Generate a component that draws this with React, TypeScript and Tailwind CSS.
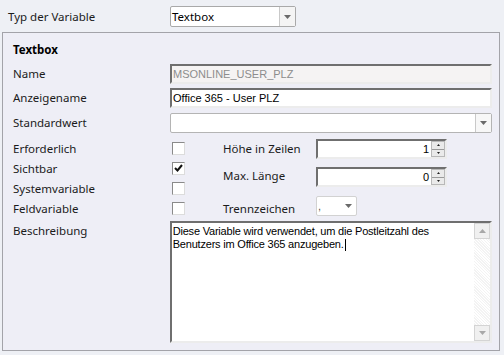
import React from 'react';

const label = "font-['Noto_Sans',sans-serif] text-[11.5px] text-[#1b1b1b] leading-none";
const sunken =
  'border-2 border-t-[#6f6f6f] border-l-[#6f6f6f] border-r-[#ececec] border-b-[#ececec] bg-white';
const field = "font-['Liberation_Sans',sans-serif] text-[11px] leading-none";

function Arrow() {
  return (
    <svg width="7" height="4" viewBox="0 0 7 4">
      <path d="M0 0h7L3.5 4z" fill="#6a6a6a" />
    </svg>
  );
}

function Check({ checked }: { checked?: boolean }) {
  return (
    <div className="w-[13px] h-[13px] border border-t-[#8a8a8a] border-l-[#8a8a8a] border-r-[#dcdcdc] border-b-[#dcdcdc] bg-white flex items-center justify-center">
      {checked && (
        <svg width="9" height="8" viewBox="0 0 9 8">
          <path d="M1 4l2.5 2.5L8 1" stroke="#111" strokeWidth="2" fill="none" />
        </svg>
      )}
    </div>
  );
}

function Spin({ value }: { value: string }) {
  return (
    <div className={`w-[131px] h-[20px] ${sunken} flex items-center`}>
      <span className={`${field} flex-1 text-right pr-[2px] text-black`}>{value}</span>
      <div className="w-[14px] h-full flex flex-col border border-[#b8b8b8]">
        <div className="flex-1 bg-[#eaeaea] border-b border-[#9a9a9a] flex items-center justify-center">
          <svg width="3" height="2" viewBox="0 0 3 2"><path d="M0 2h3L1.5 0z" fill="#222" /></svg>
        </div>
        <div className="flex-1 bg-[#eaeaea] flex items-center justify-center">
          <svg width="3" height="2" viewBox="0 0 3 2"><path d="M0 0h3L1.5 2z" fill="#222" /></svg>
        </div>
      </div>
    </div>
  );
}

export default function App() {
  return (
    <div className="w-[504px] h-[355px] bg-[#eef0f5] overflow-hidden pt-[6px]">
      {/* Typ der Variable */}
      <div className="flex items-center h-[21px]">
        <div className={`${label} w-[170px] pl-[8px]`}>Typ der Variable</div>
        <div className="w-[126px] h-[21px] bg-white border border-[#a9a9a9] rounded-[2px] flex items-center">
          <span className={`${label} flex-1 pl-[1px] text-black`}>Textbox</span>
          <div className="w-[16px] h-full border-l border-[#c9c9c9] bg-[#f4f4f4] flex items-center justify-center">
            <Arrow />
          </div>
        </div>
      </div>

      {/* Panel */}
      <div className="mt-[5px] ml-[2px] w-[498px] h-[319px] border border-[#a3a3a9] bg-[#eeeef6] pl-[10px] pr-[7px]">
        <div className={`${label} font-bold text-black pt-[11px] h-[31px]`}>Textbox</div>

        <div className="flex items-center h-[20px]">
          <div className={`${label} w-[157px]`}>Name</div>
          <div className={`flex-1 h-[20px] ${sunken} !bg-[#f5f3f3] flex items-center pl-[1px]`}>
            <span className={`${field} text-[#8d8d8d]`}>MSONLINE_USER_PLZ</span>
          </div>
        </div>

        <div className="flex items-center h-[20px] mt-[4px]">
          <div className={`${label} w-[157px]`}>Anzeigename</div>
          <div className={`flex-1 h-[20px] ${sunken} flex items-center pl-[1px]`}>
            <span className={`${field} text-black`}>Office 365 - User PLZ</span>
          </div>
        </div>

        <div className="flex items-center h-[20px] mt-[5px]">
          <div className={`${label} w-[157px]`}>Standardwert</div>
          <div className="flex-1 h-[20px] bg-white border border-[#b4b4b4] rounded-[2px] flex justify-end">
            <div className="w-[16px] h-full border-l border-[#c9c9c9] bg-[#f7f7f7] flex items-center justify-center">
              <Arrow />
            </div>
          </div>
        </div>

        {/* Flags and numbers */}
        <div className="flex mt-[5px] h-[83px]">
          <div className="flex flex-col">
            {[
              ['Erforderlich', false],
              ['Sichtbar', true],
              ['Systemvariable', false],
              ['Feldvariable', false],
            ].map(([t, c]) => (
              <div key={t as string} className="flex items-center h-[20px]">
                <div className={`${label} w-[159px] pt-[2px]`}>{t as string}</div>
                <div className="w-[51px]">
                  <Check checked={c as boolean} />
                </div>
              </div>
            ))}
          </div>
          <div className="flex flex-col pt-[1px]">
            <div className="flex items-center h-[20px]">
              <div className={`${label} w-[93px]`}>Höhe in Zeilen</div>
              <Spin value="1" />
            </div>
            <div className="flex items-center h-[20px] mt-[8px]">
              <div className={`${label} w-[93px] -mt-[3px]`}>Max. Länge</div>
              <Spin value="0" />
            </div>
            <div className="flex items-center h-[20px] mt-[9px]">
              <div className={`${label} w-[93px] mt-[6px]`}>Trennzeichen</div>
              <div className="w-[41px] h-[20px] bg-white border border-[#d2d2d2] rounded-[2px] flex items-center">
                <span className={`${field} flex-1 pl-[1px] text-[#555]`}>,</span>
                <div className="w-[16px] flex items-center justify-center">
                  <Arrow />
                </div>
              </div>
            </div>
          </div>
        </div>

        {/* Beschreibung */}
        <div className="flex">
          <div className={`${label} w-[157px] pt-[4px]`}>Beschreibung</div>
          <div className={`w-[323px] h-[122px] ${sunken} flex`}>
            <div className="flex-1 pl-[1px] pt-[2px] text-black font-['Liberation_Sans',sans-serif] text-[11px] tracking-[-0.2px] leading-[13px]">
              Diese Variable wird verwendet, um die Postleitzahl des
              <br />
              Benutzers im Office 365 anzugeben.
              <span className="inline-block w-px h-[12px] bg-black align-middle ml-px" />
            </div>
            <div className="w-[16px] flex flex-col bg-[repeating-linear-gradient(45deg,#f3f3f3_0px,#f3f3f3_1px,#ffffff_1px,#ffffff_2px)]">
              <div className="h-[16px] bg-[#f0f0f0] border border-[#d4d4d4] flex items-center justify-center">
                <svg width="7" height="4" viewBox="0 0 7 4"><path d="M0 4h7L3.5 0z" fill="#a8a8a8" /></svg>
              </div>
              <div className="flex-1" />
              <div className="h-[16px] bg-[#f0f0f0] border border-[#d4d4d4] flex items-center justify-center">
                <svg width="7" height="4" viewBox="0 0 7 4"><path d="M0 0h7L3.5 4z" fill="#a8a8a8" /></svg>
              </div>
            </div>
          </div>
        </div>
      </div>
    </div>
  );
}
